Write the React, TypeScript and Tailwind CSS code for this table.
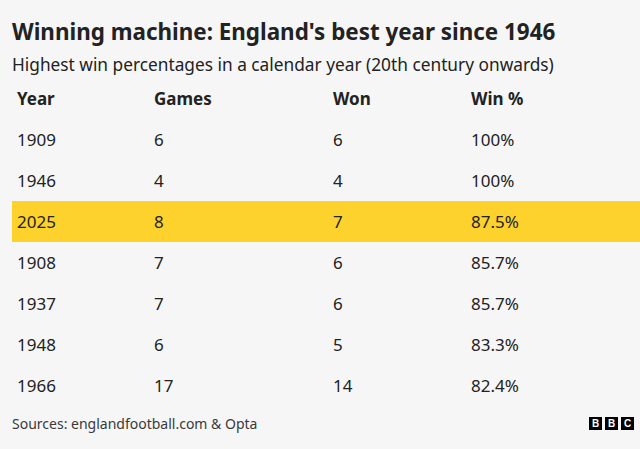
export default function App() {
  const rows = [
    ['1909', '6', '6', '100%'],
    ['1946', '4', '4', '100%'],
    ['2025', '8', '7', '87.5%'],
    ['1908', '7', '6', '85.7%'],
    ['1937', '7', '6', '85.7%'],
    ['1948', '6', '5', '83.3%'],
    ['1966', '17', '14', '82.4%'],
  ]

  return (
    <div className="w-[640px] h-[449px] bg-[#f6f6f6] text-[#222222] font-['Noto_Sans',sans-serif] overflow-hidden">
      <div className="pl-3 pt-[17px]">
        <h1 className="text-[22.4px] leading-[30px] font-bold">
          Winning machine: England's best year since 1946
        </h1>
        <p className="text-[17.3px] leading-[24px] mt-[6px]">
          Highest win percentages in a calendar year (20th century onwards)
        </p>
      </div>
      <div className="mt-[1px] pl-3">
        <div className="flex h-[41px] items-center pl-[5px] text-[17px] font-bold">
          <div className="w-[137px]">Year</div>
          <div className="w-[179px]">Games</div>
          <div className="w-[138px]">Won</div>
          <div>Win %</div>
        </div>
        {rows.map((r) => (
          <div
            key={r[0]}
            className={
              r[0] === '2025'
                ? 'flex h-[41px] items-center pl-[5px] text-[17px] bg-[#fdd22c]'
                : 'flex h-[41px] items-center pl-[5px] text-[17px]'
            }
          >
            <div className="w-[137px]">{r[0]}</div>
            <div className="w-[179px]">{r[1]}</div>
            <div className="w-[138px]">{r[2]}</div>
            <div>{r[3]}</div>
          </div>
        ))}
      </div>
      <div className="flex items-center justify-between pl-3 pr-[6px] mt-[7px]">
        <span className="text-[14px] text-[#3a3a3a]">
          Sources: englandfootball.com &amp; Opta
        </span>
        <div className="flex gap-[3px]">
          {['B', 'B', 'C'].map((l, i) => (
            <div
              key={i}
              className="w-[13px] h-[13px] bg-black text-white text-[10px] leading-[13px] font-bold text-center font-['Liberation_Sans',sans-serif]"
            >
              {l}
            </div>
          ))}
        </div>
      </div>
    </div>
  )
}
